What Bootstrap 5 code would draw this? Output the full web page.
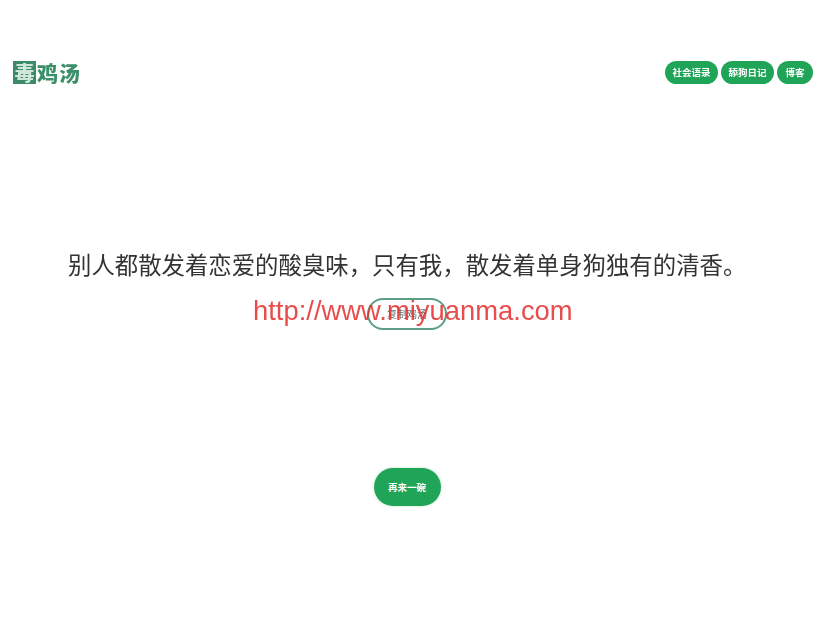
<!DOCTYPE html>
<html lang="zh-CN">
<head>
<meta charset="utf-8">
<title>毒鸡汤</title>
<link rel="stylesheet" href="https://cdn.jsdelivr.net/npm/bootstrap@5.3.0/dist/css/bootstrap.min.css">
<style>
body{font-family:"Noto Sans CJK SC","Liberation Sans",sans-serif;background:#fff;overflow:hidden;height:617px;position:relative}
.page-wrap{width:814px}
.top-bar{padding:61px 1px 0 13px;height:171px}
.logo-mark{color:#3c9069;font-weight:900;font-size:21px;line-height:23px;letter-spacing:1px;filter:blur(.45px)}
.logo-box{background:#3c8a68;color:#cfe6da;width:23px;height:23px;font-size:20px;line-height:23px;letter-spacing:0;margin-right:1px}
.pill-nav{background:#20a457;color:#fff;font-weight:700;font-size:9.5px;line-height:13px;padding:5px 7.5px;border-radius:12px;height:23px;filter:blur(.3px);min-width:36px;text-align:center}
.nav-set{gap:3px}
.quote-line{font-size:23.4px;line-height:32px;color:#333;padding-left:68px;white-space:nowrap;margin-top:77px;filter:blur(.35px)}
.outline-pill{width:80px;height:32px;border:2px solid #5b9f84;border-radius:16px;color:#666;font-size:10px;line-height:28px;text-align:center;margin-top:18px;background:#fff;filter:blur(.3px)}
.again-btn{width:67px;height:38px;border-radius:19px;background:#20a457;color:#fff;border:0;font-size:9.5px;font-weight:700;padding:0;margin-top:138px;box-shadow:0 0 3px rgba(31,170,89,.3)}
.mark-over{position:absolute;left:253px;top:294px;font-family:"Liberation Sans",sans-serif;font-size:27.4px;line-height:34px;color:#e52d2d;opacity:.85;pointer-events:none;white-space:nowrap}
</style>
</head>
<body>
<div class="page-wrap">
  <header class="top-bar d-flex justify-content-between align-items-start">
    <div class="logo-mark d-flex align-items-center"><span class="logo-box d-inline-block text-center">毒</span><span>鸡汤</span></div>
    <nav class="d-flex nav-set">
      <a class="pill-nav text-decoration-none" href="#">社会语录</a>
      <a class="pill-nav text-decoration-none" href="#">舔狗日记</a>
      <a class="pill-nav text-decoration-none" href="#">博客</a>
    </nav>
  </header>
  <main class="d-flex flex-column align-items-center">
    <div class="quote-line w-100">别人都散发着恋爱的酸臭味，只有我，散发着单身狗独有的清香。</div>
    <div class="outline-pill">复制鸡汤</div>
    <button class="again-btn btn" type="button">再来一碗</button>
  </main>
</div>
<div class="mark-over">http://www.miyuanma.com</div>
<script src="https://cdn.jsdelivr.net/npm/bootstrap@5.3.0/dist/js/bootstrap.bundle.min.js"></script>
</body>
</html>
